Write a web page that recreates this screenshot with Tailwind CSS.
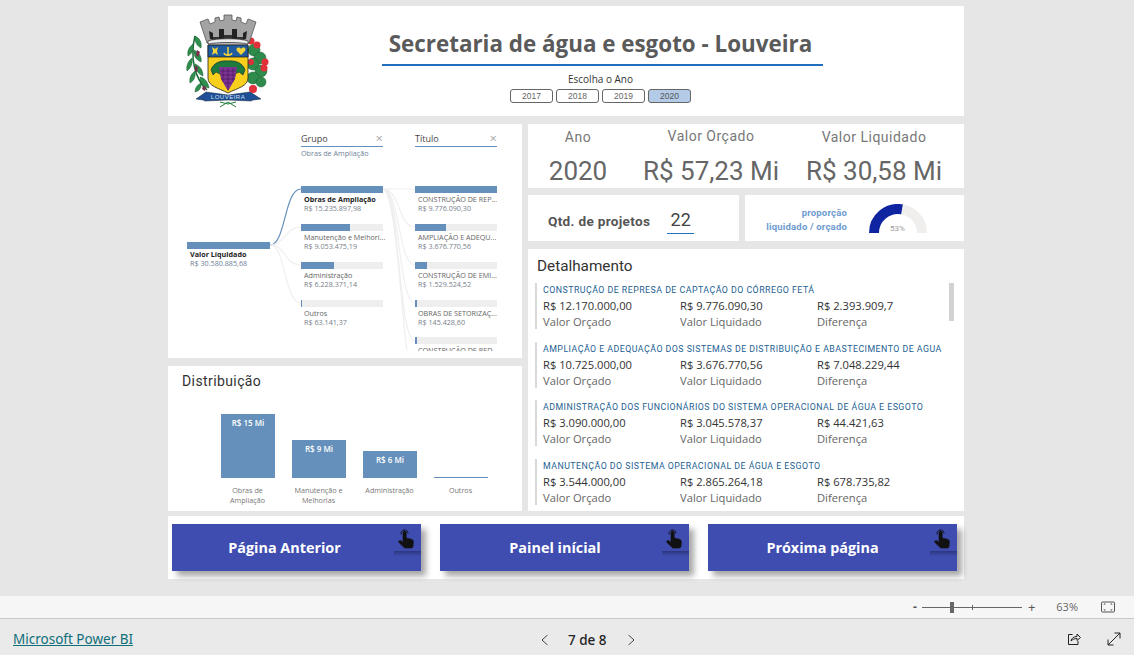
<!DOCTYPE html>
<html lang="en">
<head>
  <meta charset="UTF-8">
  <meta name="viewport" content="width=device-width, initial-scale=1.0">
  <title>Secretaria de água e esgoto - Louveira</title>
  <script src="https://cdn.jsdelivr.net/npm/@tailwindcss/browser@4"></script>
</head>
<body class="bg-[#e6e6e6] h-[655px] w-[1134px] overflow-hidden flex flex-col font-['Open_Sans',sans-serif]">
  <!-- Report canvas -->
  <main class="h-[596px] pt-[6px] w-[796px] ml-[168px] flex flex-col">
    <!-- Header -->
    <header class="bg-white h-[110px] flex shrink-0">
      <div class="w-[214px] pl-[14px] pt-[6px]">
        <svg width="92" height="98" viewBox="0 0 92 98">
          <!-- laurel -->
          <path d="M25 78C12 66 8 44 13 24" stroke="#1d6b38" stroke-width="1.5" fill="none"/>
          <g fill="#2f8f4e" stroke="#17582d" stroke-width=".5">
            <path d="M13 24c5 2 7 7 6 12-4-2-7-7-6-12z"/><path d="M11 32c-4 3-6 7-5 12 4-2 6-7 5-12z"/>
            <path d="M12 38c5 2 8 7 7 12-5-2-8-7-7-12z"/><path d="M10 46c-4 3-6 8-5 13 4-3 6-8 5-13z"/>
            <path d="M13 52c5 2 8 6 8 12-5-2-8-7-8-12z"/><path d="M13 59c-4 3-6 7-5 12 4-2 6-7 5-12z"/>
            <path d="M18 65c5 1 8 5 9 11-6-1-9-6-9-11z"/><path d="M19 71c-4 2-6 5-6 9 4-1 7-4 6-9z"/>
          </g>
          <path d="M15 38l3 2-2 5-2-2zM13 54l3 1-1 5-2-1zM21 74l3 1-1 4-3-2z" fill="#7c2a4a"/>
          <!-- coffee branch -->
          <g fill="#2e8b4c" stroke="#17582d" stroke-width=".5">
            <circle cx="72" cy="38" r="6"/><circle cx="78" cy="46" r="6"/><circle cx="71" cy="52" r="6"/>
            <circle cx="79" cy="59" r="6"/><circle cx="71" cy="66" r="6"/><circle cx="79" cy="70" r="5"/>
          </g>
          <g fill="#e0303a">
            <circle cx="69" cy="29" r="3.500"/><circle cx="75" cy="33" r="3.500"/><circle cx="83" cy="50" r="3.500"/>
            <circle cx="69" cy="50" r="3"/><circle cx="82" cy="56" r="3.500"/><circle cx="71" cy="77" r="4"/>
          </g>
          <!-- crown -->
          <path d="M18 10l8-3 2 5 5-2V6l4-1 1 4 4-1V3h8v5l4 1 1-4 4 1v4l5 2 2-5 8 3-7 21H25z" fill="#a3a3a3" stroke="#555" stroke-width=".8"/>
          <path d="M27 19l4 2v7l-3-1zM37 17h5v10h-5zM50 17h5v10h-5zM65 19l-4 2v7l3-1z" fill="#222"/>
          <path d="M42 23h8v5h-8zM31 25h6v3h-6zM55 25h6v3h-6z" fill="#333"/>
          <path d="M26 29c8-3 32-3 40 0v3c-8-2-32-2-40 0z" fill="#eee" stroke="#333" stroke-width=".7"/>
          <!-- shield -->
          <path d="M26 33h40v33c0 8-10 10-20 15-10-5-20-7-20-15z" fill="#f8cf1c" stroke="#222" stroke-width=".8"/>
          <path d="M26 33h40v12H26z" fill="#1f5c9f" stroke="#222" stroke-width=".8"/>
          <path d="M30 35l3 2 3-2-1 4 1 4-3-2-3 2 1-4z" fill="#f4d33a"/>
          <path d="M46 35v9m-4-3c1 3 7 3 8 0" stroke="#f4d33a" stroke-width="1.500" fill="none"/>
          <path d="M59 43l-4-4c-2-3 2-5 4-2 2-3 6-1 4 2z" fill="#f4d33a"/>
          <!-- grapes -->
          <path d="M29 58c2-7 10-10 17-9 7-1 15 2 17 9l-2 5-4-3-4 2H38l-4-2-3 3z" fill="#1f7a3e" stroke="#123" stroke-width=".6"/>
          <path d="M37 55h18l-2 12-7 12-7-12z" fill="#7d3494"/>
          <path d="M38 59h16M38 63h16M39 67h14M42 71h8M41 56v14M46 56v22M51 56v14" stroke="#4d1c60" stroke-width=".8"/>
          <!-- ribbon -->
          <path d="M14 87l10-7 22 3 22-3 11 7-8 1-2 1-23-1-23 1-2-1z" fill="#1f4f97" stroke="#123" stroke-width=".5"/>
          <text x="46" y="87" text-anchor="middle" font-size="6" font-family="Liberation Sans" fill="#cfe0f2" letter-spacing=".5">LOUVEIRA</text>
          <path d="M38 95l8-5 8 5M38 90l8 2 8-2" stroke="#1f7a3e" stroke-width="1" fill="none"/>
        </svg>
      </div>
      <div class="w-[441px] flex flex-col items-center">
        <h1 class="-ml-[4px] mt-[22px] text-[22.4px] leading-[32px] font-bold text-[#5a5a5a] whitespace-nowrap">Secretaria de água e esgoto - Louveira</h1>
        <div class="w-full h-[2px] bg-[#1f6fbd] mt-[4px]"></div>
        <p class="-ml-[4px] mt-[6px] text-[10px] leading-[14px] text-[#333]">Escolha o Ano</p>
        <div class="-ml-[4px] flex gap-[3px] mt-[3px]">
          <button class="w-[43px] h-[14px] rounded-[3px] border border-[#666] text-[8.5px] leading-[12px] text-[#666] font-['Liberation_Sans']">2017</button>
          <button class="w-[43px] h-[14px] rounded-[3px] border border-[#666] text-[8.5px] leading-[12px] text-[#666] font-['Liberation_Sans']">2018</button>
          <button class="w-[43px] h-[14px] rounded-[3px] border border-[#666] text-[8.5px] leading-[12px] text-[#666] font-['Liberation_Sans']">2019</button>
          <button class="w-[43px] h-[14px] rounded-[3px] border border-[#666] bg-[#b3cbe6] text-[8.5px] leading-[12px] text-[#555] font-['Liberation_Sans']">2020</button>
        </div>
      </div>
    </header>

    <div class="flex gap-[6px] mt-[8px] h-[387px] shrink-0">
      <!-- Left column -->
      <div class="w-[354px] flex flex-col gap-[8px]">
        <!-- Decomposition tree -->
        <section class="relative bg-white h-[234px] overflow-hidden flex pl-[19px]">
          <svg class="absolute left-0 top-0" width="354" height="234" fill="none">
            <path d="M102 121C118 121 116 65 133 65" stroke="#6490bb" stroke-width="1.2"/>
            <path d="M102 121C118 121 116 103 133 103M102 121C118 121 116 141 133 141M102 121C118 121 116 179 133 179" stroke="#efefef" stroke-width="1.2"/>
            <path d="M215 65H247M215 65C232 65 230 103 247 103M215 65C232 65 230 141 247 141M215 65C232 65 230 179 247 179M215 65C232 65 230 217 247 217M215 65C228 70 232 180 240 234" stroke="#efefef" stroke-width="1.2"/>
          </svg>
          <div class="relative w-[83px] pt-[118px]">
            <div class="h-[7px] bg-[#6490bb]"></div>
            <div class="pl-[3px] text-[7.2px] leading-[9px] mt-[1px]">
              <p class="font-bold text-[#222]">Valor Líquidado</p>
              <p class="text-[#6f8299]">R$ 30.580.885,68</p>
            </div>
          </div>
          <div class="relative w-[82px] ml-[31px] shrink-0">
            <div class="flex justify-between items-center h-[22px] pt-[8px] text-[9px] text-[#444]"><span>Grupo</span><span class="text-[#aaa] text-[13px]">×</span></div>
            <div class="h-[1px] bg-[#6490bb]"></div>
            <p class="mt-[1px] text-[7.2px] leading-[10px] text-[#6f8299] whitespace-nowrap h-[38px]">Obras de Ampliação</p>
            <div class="h-[38px]">
              <div class="h-[7px] bg-[#6490bb]"></div>
              <div class="pl-[3px] text-[7.2px] leading-[8.500px] mt-[2px] whitespace-nowrap"><p class="font-bold text-[#222]">Obras de Ampliação</p><p class="text-[#77808a]">R$ 15.235.897,98</p></div>
            </div>
            <div class="h-[38px]">
              <div class="h-[7px] bg-[#eeeeee]"><div class="h-full w-[60%] bg-[#6490bb]"></div></div>
              <div class="pl-[3px] text-[7.2px] leading-[8.500px] mt-[2px] whitespace-nowrap text-[#666]"><p>Manutenção e Melhori...</p><p class="text-[#77808a]">R$ 9.053.475,19</p></div>
            </div>
            <div class="h-[38px]">
              <div class="h-[7px] bg-[#eeeeee]"><div class="h-full w-[40%] bg-[#6490bb]"></div></div>
              <div class="pl-[3px] text-[7.2px] leading-[8.500px] mt-[2px] whitespace-nowrap text-[#666]"><p>Administração</p><p class="text-[#77808a]">R$ 6.228.371,14</p></div>
            </div>
            <div class="h-[38px]">
              <div class="h-[7px] bg-[#eeeeee]"><div class="h-full w-[1%] bg-[#6490bb]"></div></div>
              <div class="pl-[3px] text-[7.2px] leading-[8.500px] mt-[2px] whitespace-nowrap text-[#666]"><p>Outros</p><p class="text-[#77808a]">R$ 63.141,37</p></div>
            </div>
          </div>
          <div class="relative w-[82px] ml-[32px] shrink-0">
            <div class="flex justify-between items-center h-[22px] pt-[8px] text-[9px] text-[#444]"><span>Título</span><span class="text-[#aaa] text-[13px]">×</span></div>
            <div class="h-[1px] bg-[#6490bb]"></div>
            <p class="mt-[1px] leading-[10px] h-[38px]"></p>
            <div class="h-[38px]">
              <div class="h-[7px] bg-[#6490bb]"></div>
              <div class="pl-[3px] text-[7.2px] leading-[8.500px] mt-[2px] whitespace-nowrap text-[#666]"><p>CONSTRUÇÃO DE REP...</p><p class="text-[#77808a]">R$ 9.776.090,30</p></div>
            </div>
            <div class="h-[38px]">
              <div class="h-[7px] bg-[#eeeeee]"><div class="h-full w-[38%] bg-[#6490bb]"></div></div>
              <div class="pl-[3px] text-[7.2px] leading-[8.500px] mt-[2px] whitespace-nowrap text-[#666]"><p>AMPLIAÇÃO E ADEQU...</p><p class="text-[#77808a]">R$ 3.676.770,56</p></div>
            </div>
            <div class="h-[38px]">
              <div class="h-[7px] bg-[#eeeeee]"><div class="h-full w-[15%] bg-[#6490bb]"></div></div>
              <div class="pl-[3px] text-[7.2px] leading-[8.500px] mt-[2px] whitespace-nowrap text-[#666]"><p>CONSTRUÇÃO DE EMI...</p><p class="text-[#77808a]">R$ 1.529.524,52</p></div>
            </div>
            <div class="h-[37px]">
              <div class="h-[7px] bg-[#eeeeee]"><div class="h-full w-[2%] bg-[#6490bb]"></div></div>
              <div class="pl-[3px] text-[7.2px] leading-[8.500px] mt-[2px] whitespace-nowrap text-[#666]"><p>OBRAS DE SETORIZAÇ...</p><p class="text-[#77808a]">R$ 145.428,60</p></div>
            </div>
            <div class="h-[16px] overflow-hidden">
              <div class="h-[7px] bg-[#eeeeee]"><div class="h-full w-[2%] bg-[#6490bb]"></div></div>
              <div class="pl-[3px] text-[7.2px] leading-[8.500px] mt-[2px] whitespace-nowrap text-[#666]"><p>CONSTRUÇÃO DE RED</p></div>
            </div>
          </div>
          <div class="absolute left-0 bottom-0 w-full h-[7px] bg-white"></div>
        </section>

        <!-- Distribution chart -->
        <section class="bg-white h-[145px] pl-[14px] pt-[5px]">
          <h2 class="font-['Roboto'] text-[14px] leading-[20px] tracking-[0.4px] text-[#333]">Distribuição</h2>
          <div class="flex gap-[17px] ml-[39px] items-end h-[64px] mt-[23px]">
            <div class="w-[54px] h-[64px] bg-[#6490bb] text-center text-white text-[8px] leading-[10px] pt-[4px] font-semibold">R$ 15 Mi</div>
            <div class="w-[54px] h-[38px] bg-[#6490bb] text-center text-white text-[8px] leading-[10px] pt-[4px] font-semibold">R$ 9 Mi</div>
            <div class="w-[54px] h-[27px] bg-[#6490bb] text-center text-white text-[8px] leading-[10px] pt-[4px] font-semibold">R$ 6 Mi</div>
            <div class="w-[54px] h-[1px] bg-[#6490bb]"></div>
          </div>
          <div class="flex ml-[30px] mt-[7px] text-center text-[7.2px] leading-[10px] text-[#777]">
            <p class="w-[71px]">Obras de<br>Ampliação</p>
            <p class="w-[71px]">Manutenção e<br>Melhorias</p>
            <p class="w-[71px]">Administração</p>
            <p class="w-[71px]">Outros</p>
          </div>
        </section>
      </div>

      <!-- Right column -->
      <div class="w-[436px] flex flex-col">
        <section class="bg-white h-[64px] relative font-['Roboto'] text-[#666]">
          <div class="grid grid-cols-[100px_166px_160px] text-center h-full">
            <div class="flex flex-col"><p class="text-[14px] leading-[18px] mt-[4px] tracking-[0.5px] text-[#777]">Ano</p><p class="text-[26px] leading-[32px] mt-[9px]">2020</p></div>
            <div class="flex flex-col"><p class="text-[14px] leading-[18px] mt-[3px] tracking-[0.5px] text-[#777]">Valor Orçado</p><p class="text-[26px] leading-[32px] mt-[10px] whitespace-nowrap">R$ 57,23 Mi</p></div>
            <div class="flex flex-col"><p class="text-[14px] leading-[18px] mt-[4px] tracking-[0.5px] text-[#777]">Valor Liquidado</p><p class="text-[26px] leading-[32px] mt-[9px] whitespace-nowrap">R$ 30,58 Mi</p></div>
          </div>
        </section>

        <div class="flex gap-[6px] mt-[7px] h-[46px]">
          <section class="bg-white w-[211px] flex items-start font-['Roboto']">
            <p class="ml-[20px] mt-[18px] text-[13.600px] leading-[16px] font-bold tracking-[0.3px] text-[#555]">Qtd. de projetos</p>
            <div class="ml-[17px] mt-[12px] w-[27px] text-center">
              <p class="text-[18px] leading-[26px] text-[#444]">22</p>
              <div class="h-[1px] bg-[#1f6fbd]"></div>
            </div>
          </section>
          <section class="bg-white w-[219px] flex font-['Roboto']">
            <p class="w-[102px] text-right mt-[11px] text-[9.500px] leading-[14px] font-bold text-[#6d9bd0] tracking-[0.2px]">proporção<br>liquidado / orçado</p>
            <div class="relative ml-[22px] mt-[9px] w-[58px] h-[29px]">
              <svg width="58" height="29" viewBox="0 0 58 29" fill="none">
                <path d="M5 29A24 24 0 0 1 53 29" stroke="#f0efee" stroke-width="10"/>
                <path d="M5 29A24 24 0 0 1 33 5.300" stroke="#0f24a0" stroke-width="10"/>
              </svg>
              <span class="absolute left-[21px] top-[20px] text-[8px] leading-[10px] text-[#999]">53%</span>
            </div>
          </section>
        </div>

        <!-- Detalhamento -->
        <section class="relative bg-white mt-[8px] h-[262px] overflow-hidden pl-[7px]">
          <h2 class="ml-[2px] font-['Roboto'] text-[15.300px] leading-[20px] pt-[7px] h-[34px] text-[#333]">Detalhamento</h2>
          <div class="absolute left-[421px] top-[34px] w-[5px] h-[38px] bg-[#d2d2d2]"></div>
          <div class="flex flex-col gap-[12.700px]">
            <article class="border-l-2 border-[#d9d9d9] pl-[6px] h-[46px]">
              <p class="font-['Roboto'] text-[8.800px] leading-[12px] pt-[1px] h-[13px] tracking-[0.47px] text-[#245f93] whitespace-nowrap">CONSTRUÇÃO DE REPRESA DE CAPTAÇÃO DO CÓRREGO FETÁ</p>
              <div class="grid grid-cols-[137px_137px_137px] text-[11.200px] leading-[16px] mt-[2px] text-[#333]"><p>R$ 12.170.000,00</p><p>R$ 9.776.090,30</p><p>R$ 2.393.909,7</p><p class="text-[#666]">Valor Orçado</p><p class="text-[#666]">Valor Liquidado</p><p class="text-[#666]">Diferença</p></div>
            </article>
            <article class="border-l-2 border-[#d9d9d9] pl-[6px] h-[46px]">
              <p class="font-['Roboto'] text-[8.800px] leading-[12px] pt-[1px] h-[13px] tracking-[0.47px] text-[#245f93] whitespace-nowrap">AMPLIAÇÃO E ADEQUAÇÃO DOS SISTEMAS DE DISTRIBUIÇÃO E ABASTECIMENTO DE AGUA</p>
              <div class="grid grid-cols-[137px_137px_137px] text-[11.200px] leading-[16px] mt-[2px] text-[#333]"><p>R$ 10.725.000,00</p><p>R$ 3.676.770,56</p><p>R$ 7.048.229,44</p><p class="text-[#666]">Valor Orçado</p><p class="text-[#666]">Valor Liquidado</p><p class="text-[#666]">Diferença</p></div>
            </article>
            <article class="border-l-2 border-[#d9d9d9] pl-[6px] h-[46px]">
              <p class="font-['Roboto'] text-[8.800px] leading-[12px] pt-[1px] h-[13px] tracking-[0.47px] text-[#245f93] whitespace-nowrap">ADMINISTRAÇÃO DOS FUNCIONÁRIOS DO SISTEMA OPERACIONAL DE ÁGUA E ESGOTO</p>
              <div class="grid grid-cols-[137px_137px_137px] text-[11.200px] leading-[16px] mt-[2px] text-[#333]"><p>R$ 3.090.000,00</p><p>R$ 3.045.578,37</p><p>R$ 44.421,63</p><p class="text-[#666]">Valor Orçado</p><p class="text-[#666]">Valor Liquidado</p><p class="text-[#666]">Diferença</p></div>
            </article>
            <article class="border-l-2 border-[#d9d9d9] pl-[6px] h-[46px]">
              <p class="font-['Roboto'] text-[8.800px] leading-[12px] pt-[1px] h-[13px] tracking-[0.47px] text-[#245f93] whitespace-nowrap">MANUTENÇÃO DO SISTEMA OPERACIONAL DE ÁGUA E ESGOTO</p>
              <div class="grid grid-cols-[137px_137px_137px] text-[11.200px] leading-[16px] mt-[2px] text-[#333]"><p>R$ 3.544.000,00</p><p>R$ 2.865.264,18</p><p>R$ 678.735,82</p><p class="text-[#666]">Valor Orçado</p><p class="text-[#666]">Valor Liquidado</p><p class="text-[#666]">Diferença</p></div>
            </article>
          </div>
        </section>
      </div>
    </div>

    <!-- Navigation buttons -->
    <nav class="bg-white h-[63px] mt-[5px] flex gap-[19px] pl-[4px] pt-[8px] shrink-0">
      <button class="relative w-[249px] h-[47px] pr-[24px] bg-[#3f4db0] text-white text-[14.400px] font-bold shadow-[5px_5px_6px_rgba(0,0,0,0.35)]">Página Anterior
        <span class="absolute right-0 top-[27px] w-[27px] h-[5px] bg-linear-to-b from-black/30 to-transparent"></span>
        <svg class="absolute right-[5px] top-[5px]" width="20" height="20" viewBox="0 0 20 20"><path d="M7 3.500a1.600 1.600 0 0 1 3.200 0V9l5 1.200c1.600.4 2.300 1.500 2.200 3l-.4 4c-.1 1-.9 1.800-2 1.800H9.500c-.8 0-1.400-.3-1.900-.9L3 13.500c-.9-1.200.6-2.700 1.900-1.700L7 13.300z" fill="#111" stroke="#111" stroke-width=".6"/><path d="M5.200 5.500a3.500 3.500 0 1 1 6.800-1" fill="none" stroke="#111" stroke-width=".9"/></svg>
      </button>
      <button class="relative w-[249px] h-[47px] pr-[19px] bg-[#3f4db0] text-white text-[14.400px] font-bold shadow-[5px_5px_6px_rgba(0,0,0,0.35)]">Painel inícial
        <span class="absolute right-0 top-[27px] w-[27px] h-[5px] bg-linear-to-b from-black/30 to-transparent"></span>
        <svg class="absolute right-[5px] top-[5px]" width="20" height="20" viewBox="0 0 20 20"><path d="M7 3.500a1.600 1.600 0 0 1 3.200 0V9l5 1.200c1.600.4 2.300 1.500 2.200 3l-.4 4c-.1 1-.9 1.800-2 1.800H9.500c-.8 0-1.400-.3-1.900-.9L3 13.500c-.9-1.200.6-2.700 1.900-1.700L7 13.300z" fill="#111" stroke="#111" stroke-width=".6"/><path d="M5.200 5.500a3.500 3.500 0 1 1 6.800-1" fill="none" stroke="#111" stroke-width=".9"/></svg>
      </button>
      <button class="relative w-[249px] h-[47px] pr-[20px] bg-[#3f4db0] text-white text-[14.400px] font-bold shadow-[5px_5px_6px_rgba(0,0,0,0.35)]">Próxima página
        <span class="absolute right-0 top-[27px] w-[27px] h-[5px] bg-linear-to-b from-black/30 to-transparent"></span>
        <svg class="absolute right-[5px] top-[5px]" width="20" height="20" viewBox="0 0 20 20"><path d="M7 3.500a1.600 1.600 0 0 1 3.200 0V9l5 1.200c1.600.4 2.300 1.500 2.200 3l-.4 4c-.1 1-.9 1.800-2 1.800H9.500c-.8 0-1.400-.3-1.900-.9L3 13.500c-.9-1.200.6-2.700 1.900-1.700L7 13.300z" fill="#111" stroke="#111" stroke-width=".6"/><path d="M5.200 5.500a3.500 3.500 0 1 1 6.800-1" fill="none" stroke="#111" stroke-width=".9"/></svg>
      </button>
    </nav>
  </main>

  <!-- Zoom bar -->
  <div class="h-[23px] bg-[#f6f6f6] border-b border-[#c8c8c8] flex items-center justify-end shrink-0">
    <span class="text-[#555] text-[12px] font-bold leading-none">-</span>
    <div class="relative w-[100px] h-[1px] bg-[#666] ml-[5px]">
      <div class="absolute left-[28px] -top-[5px] w-[4px] h-[11px] bg-[#666]"></div>
      <div class="absolute left-[50px] -top-[2px] w-[1px] h-[5px] bg-[#666]"></div>
    </div>
    <span class="ml-[6px] text-[#555] text-[13px] leading-none">+</span>
    <span class="ml-[21px] text-[11px] text-[#666]">63%</span>
    <svg class="ml-[23px] mr-[19px]" width="14" height="12" viewBox="0 0 14 12" fill="none" stroke="#555"><rect x=".5" y="1" width="13" height="10" rx="1"/><path d="M3 3.500V3h1.500M11 3.500V3H9.500M3 8.500V9h1.500M11 8.500V9H9.500"/></svg>
  </div>

  <!-- Footer -->
  <footer class="relative flex-1 bg-[#eaeaea] flex items-center">
    <a class="ml-[13px] mt-[5px] text-[13.500px] text-[#0f6e7a] underline font-['Noto_Sans']">Microsoft Power BI</a>
    <div class="absolute left-[540px] top-[3px] h-full flex items-center">
      <svg width="10" height="12" viewBox="0 0 10 12" fill="none" stroke="#444"><path d="M7.500 1 2 6l5.500 5"/></svg>
      <span class="ml-[18px] text-[13.500px] font-medium text-[#222] font-['Noto_Sans']">7 de 8</span>
      <svg class="ml-[19px]" width="10" height="12" viewBox="0 0 10 12" fill="none" stroke="#444"><path d="m2.500 1 5.500 5-5.500 5"/></svg>
    </div>
    <div class="absolute right-[13px] top-[2px] h-full flex items-center gap-[26px]">
      <svg width="14" height="14" viewBox="0 0 14 14" fill="none" stroke="#222"><path d="M5.500 2.500H1.500v10h9.500V9"/><path d="M4 9c.5-3 3-4.500 6-4.500V2l3.500 3.500L10 8.500v-2c-2.500 0-4.500 1-6 2.500z"/></svg>
      <svg width="14" height="14" viewBox="0 0 14 14" fill="none" stroke="#222"><path d="M1 13 13 1M7.500 1H13v5.500M1 7.500V13h5.500"/></svg>
    </div>
  </footer>
</body>
</html>
